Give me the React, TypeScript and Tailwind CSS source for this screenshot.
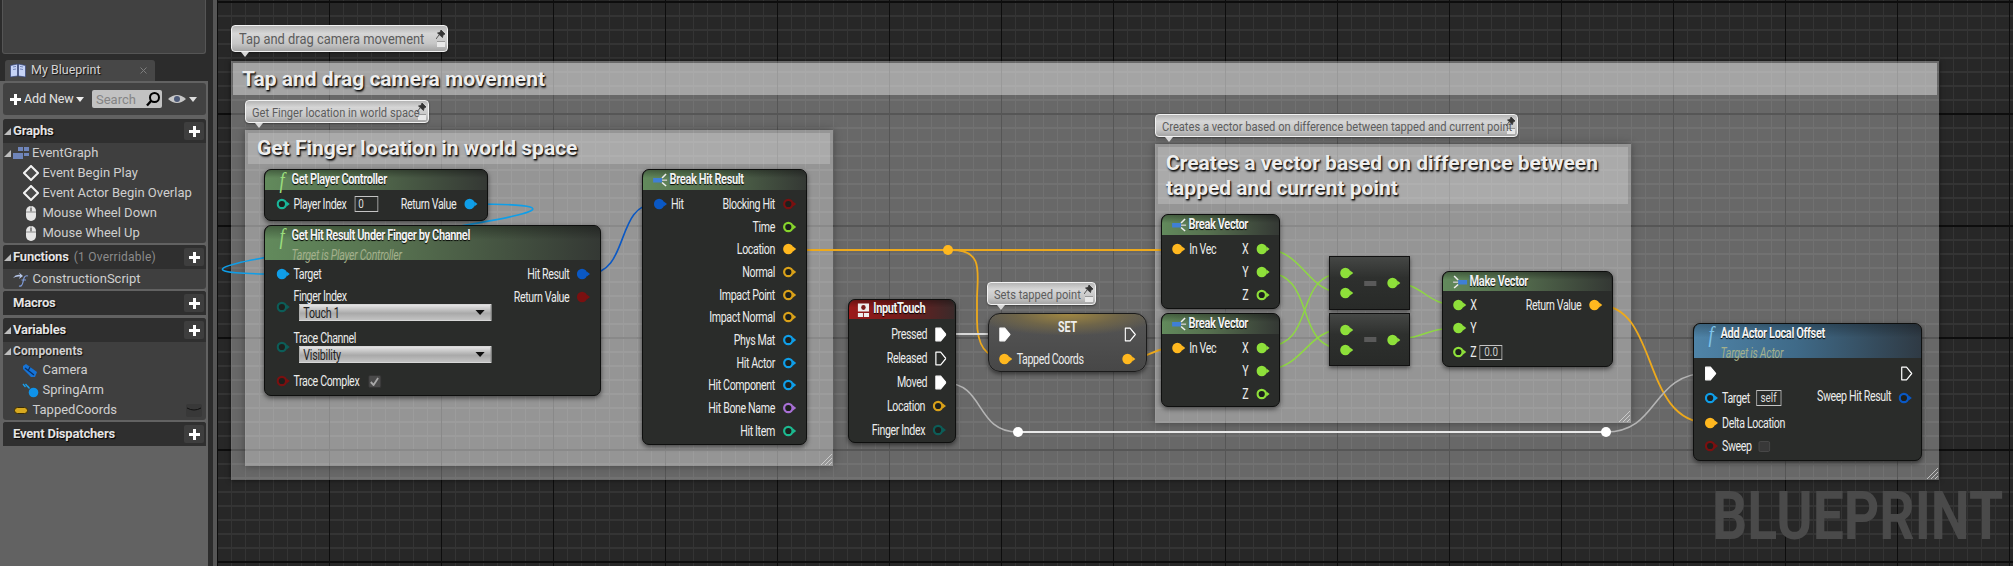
import React from "react";

type PinKind = "fill" | "ring";

/* Node contents are laid out wide and squeezed to .76, as the zoomed-out graph editor draws its text. */
function Pin({ color, kind = "fill" }: { color: string; kind?: PinKind }) {
  return (
    <svg width="18.4" height="12" viewBox="0 0 14 12" preserveAspectRatio="none" className="shrink-0">
      <path d="M10.2 3.6 L13.4 6 L10.2 8.4 Z" fill={color} />
      {kind === "fill" ? (
        <circle cx="5.5" cy="6" r="5.2" fill={color} />
      ) : (
        <circle cx="5.5" cy="6" r="4.2" fill="#1d201d" stroke={color} strokeWidth="2.2" />
      )}
    </svg>
  );
}

function Exec({ filled }: { filled?: boolean }) {
  return (
    <svg width="15.8" height="15" viewBox="0 0 12 15" preserveAspectRatio="none" className="shrink-0">
      <path
        d="M1 1.2 H5.8 L11 7.5 L5.8 13.8 H1 Z"
        fill={filled ? "#fff" : "none"}
        stroke="#fff"
        strokeWidth="1.2"
        strokeLinejoin="round"
      />
    </svg>
  );
}

const label = "text-[14px] tracking-[-0.5px] leading-none text-[#ececec] whitespace-nowrap";
const nodeBase = "absolute bg-[#2a2c2a] border border-[#0e0f0e] rounded-[7px] shadow-[0_2px_5px_rgba(0,0,0,0.55)]";

function Squeeze({ children, className = "" }: { children: React.ReactNode; className?: string }) {
  return <div className={"w-[131.6%] h-full origin-top-left scale-x-[.76] flex flex-col " + className}>{children}</div>;
}

function Title({ children, sub, icon }: { children: React.ReactNode; sub?: string; icon: React.ReactNode }) {
  return (
    <div className="flex items-start h-full pl-[12px]">
      <div className="w-[21px] h-[20px] flex items-center justify-center shrink-0 mr-[2px]">{icon}</div>
      <div className="flex flex-col">
        <span className="text-[14.5px] tracking-[-0.5px] leading-[20px] font-bold text-[#f2f2f2] whitespace-nowrap [text-shadow:0_1px_1px_#000]">
          {children}
        </span>
        {sub && (
          <span className="italic text-[14px] tracking-[-0.4px] leading-[12px] mt-[3px] text-[#a3b08c] whitespace-nowrap">{sub}</span>
        )}
      </div>
    </div>
  );
}

function FIcon({ color }: { color: string }) {
  return (
    <span className="font-['Liberation_Serif',serif] italic text-[24px] leading-[20px]" style={{ color }}>
      f
    </span>
  );
}

function StructIcon({ flip }: { flip?: boolean }) {
  return (
    <svg width="21" height="14" viewBox="0 0 16 14" preserveAspectRatio="none" className={flip ? "-scale-x-100" : ""}>
      <rect x="1" y="5" width="9" height="4.5" fill="#3f7fd6" />
      <path d="M10 5 L14 1" stroke="#eee" strokeWidth="1.6" />
      <path d="M10 7.2 L15 7.2" stroke="#ccc" strokeWidth="1.4" />
      <path d="M10 9.5 L14 13" stroke="#eee" strokeWidth="1.6" />
    </svg>
  );
}

function Row({ left, right, className = "" }: { left?: React.ReactNode; right?: React.ReactNode; className?: string }) {
  return (
    <div className={"flex items-center justify-between shrink-0 " + className}>
      <div className="flex items-center gap-[4.5px]">{left}</div>
      <div className="flex items-center gap-[10px]">{right}</div>
    </div>
  );
}

function Dropdown({ text }: { text: string }) {
  return (
    <div className="w-[253px] h-[17px] ml-[8px] flex items-center justify-between pl-[4px] pr-[8px] border border-[#d8d8d8] bg-[linear-gradient(180deg,#e4e4e4,#a9a9a9_55%,#c2c2c2)]">
      <span className="text-[14px] tracking-[-0.3px] leading-none text-[#222]">{text}</span>
      <span className="w-0 h-0 border-x-[6px] border-x-transparent border-t-[5px] border-t-[#111]" />
    </div>
  );
}

function Grip({ className }: { className: string }) {
  return (
    <svg width="12" height="12" viewBox="0 0 12 12" className={"absolute " + className}>
      <path d="M1 12 L12 1 M5 12 L12 5 M9 12 L12 9" stroke="#d8d8d8" strokeWidth="1" opacity="0.8" />
    </svg>
  );
}

function Bubble({ text, className, textClass }: { text: string; className: string; textClass: string }) {
  return (
    <div
      className={
        "absolute flex items-center rounded-[4px] border border-[#f2f2f2] bg-[linear-gradient(180deg,#b5b5b5,#d6d6d6_30%,#c6c6c6_70%,#a4a4a4)] shadow-[0_1px_2px_rgba(0,0,0,0.4)] " +
        className
      }
    >
      <div className="w-0 grow">
        <span className={"inline-block origin-left scale-x-[.89] leading-none text-[#5c5c5c] whitespace-nowrap " + textClass}>{text}</span>
      </div>
      <div className="flex flex-col items-center gap-[2px] pr-[2px] shrink-0">
        <svg width="9" height="9" viewBox="0 0 9 9">
          <path d="M5 0 L9 4 L7 5 L6.5 7.5 L1.5 3 L4 2.5 Z M3 5 L0 9" fill="#333" stroke="#333" strokeWidth="0.8" />
        </svg>
        <div className="w-[8px] h-[6px] bg-[#e8e8e8] border-t border-[#999]" />
      </div>
      <span className="absolute left-[9px] -bottom-[6px] w-0 h-0 border-x-[4px] border-x-transparent border-t-[5px] border-t-[#d8d8d8]" />
    </div>
  );
}

function Plus() {
  return (
    <span className="w-[20px] h-[18px] rounded-[2px] bg-[#3e3e3e] flex items-center justify-center shrink-0">
      <svg width="11" height="11" viewBox="0 0 11 11">
        <path d="M5.5 0 V11 M0 5.5 H11" stroke="#fff" strokeWidth="3" />
      </svg>
    </span>
  );
}

function Tri() {
  return (
    <svg width="7" height="7" viewBox="0 0 7 7" className="shrink-0">
      <path d="M0 7 L7 0 V7 Z" fill="#bdbdbd" />
    </svg>
  );
}

function SecHead({ title, extra, arrow = true }: { title: string; extra?: string; arrow?: boolean }) {
  return (
    <div className="h-[24px] flex items-center bg-[#2f2f2f] rounded-t-[3px] pl-[1px] pr-[2px] shrink-0">
      <span className="w-[9px] shrink-0 flex">{arrow && <Tri />}</span>
      <span className="text-[13px] font-bold tracking-[-0.2px] text-[#e4e4e4] [text-shadow:1px_1px_1px_#000] whitespace-nowrap">{title}</span>
      {extra && <span className="ml-[5px] text-[12px] text-[#8b8b8b] whitespace-nowrap tracking-[0.02em]">{extra}</span>}
      <span className="ml-auto">
        <Plus />
      </span>
    </div>
  );
}

function Item({ icon, text, indent }: { icon: React.ReactNode; text: string; indent: "deep" | "shallow" }) {
  return (
    <div className={"h-[20px] flex items-center " + (indent === "deep" ? "pl-[20px]" : "pl-[10px]")}>
      <span className="w-[19.5px] flex items-center shrink-0">{icon}</span>
      <span className="text-[13px] text-[#cfcfcf] whitespace-nowrap">{text}</span>
    </div>
  );
}

const Diamond = () => (
  <svg width="16" height="16" viewBox="0 0 16 16">
    <path d="M8 1 L15 8 L8 15 L1 8 Z" fill="#4a4a4a" stroke="#f2f2f2" strokeWidth="2" />
  </svg>
);
const Mouse = () => (
  <svg width="12" height="17" viewBox="0 0 12 17" className="ml-[2px]">
    <rect x="1" y="1" width="10" height="15" rx="5" fill="#e6e6e6" />
    <path d="M1 7 H11 M6 1 V7" stroke="#8a8a8a" strokeWidth="1" />
    <rect x="5" y="3" width="2" height="3" fill="#8a8a8a" />
  </svg>
);

function Sidebar() {
  return (
    <aside className="w-[208px] shrink-0 h-full bg-[#2c2c2c] flex flex-col">
      <div className="h-[54px] mx-[2px] shrink-0 bg-[#414141] border border-[#555] border-t-0 rounded-b-[3px]" />
      <div className="mt-[6px] ml-[5px] w-[150px] h-[21px] shrink-0 bg-[#474747] rounded-t-[3px] flex items-center pl-[5px] pr-[8px]">
        <svg width="16" height="15" viewBox="0 0 16 15" className="shrink-0">
          <path d="M0.5 2.5 L7.5 1 V13 L0.5 14 Z M8.5 1 L15.5 2.5 V14 L8.5 13 Z" fill="#c6d3f6" stroke="#36467c" strokeWidth="0.7" />
          <path d="M3 4 L6 3.4 M3 6.5 L6 6 M10 3.4 L13 4 M10 6 L13 6.5" stroke="#5a6ea8" strokeWidth="0.8" />
        </svg>
        <span className="ml-[5px] text-[12.5px] text-[#d4d4d4] [text-shadow:1px_1px_1px_#111]">My Blueprint</span>
        <svg width="7" height="7" viewBox="0 0 7 7" className="ml-auto">
          <path d="M0.5 0.5 L6.5 6.5 M6.5 0.5 L0.5 6.5" stroke="#7d7d7d" strokeWidth="1" />
        </svg>
      </div>
      <div className="flex-1 bg-[#626262] flex flex-col pl-[3px] pr-[2px] pt-[2px]">
        <div className="h-[32px] rounded-[3px] bg-[#424242] flex items-center pl-[7px] shrink-0">
          <svg width="11" height="11" viewBox="0 0 11 11" className="shrink-0">
            <path d="M5.5 0 V11 M0 5.5 H11" stroke="#fff" strokeWidth="3" />
          </svg>
          <span className="ml-[3px] w-[48px] text-[12.5px] tracking-[-0.1px] text-[#e2e2e2] whitespace-nowrap">Add New</span>
          <span className="ml-[4px] w-0 h-0 border-x-[4px] border-x-transparent border-t-[5px] border-t-[#eee]" />
          <div className="ml-[8px] w-[70px] h-[18px] rounded-[2px] bg-[#c2c2c2] flex items-center pl-[4px] pr-[1px] shrink-0">
            <span className="text-[13px] text-[#858585] leading-none">Search</span>
            <svg width="16" height="16" viewBox="0 0 16 16" className="ml-auto">
              <circle cx="9.5" cy="6.5" r="4.5" fill="none" stroke="#000" strokeWidth="2" />
              <path d="M6 10 L2 14.5" stroke="#000" strokeWidth="2.4" />
            </svg>
          </div>
          <svg width="18" height="10" viewBox="0 0 18 10" className="ml-[6px] shrink-0">
            <path d="M0 5 Q9 -3 18 5 Q9 13 0 5 Z" fill="#c8c8c8" />
            <circle cx="9" cy="5" r="3" fill="#4d5a78" />
          </svg>
          <span className="ml-[3px] w-0 h-0 border-x-[4px] border-x-transparent border-t-[5px] border-t-[#ddd]" />
        </div>
        <div className="mt-[4px] flex flex-col gap-[2px]">
          <section className="bg-[#3f3f3f] rounded-[3px]">
            <SecHead title="Graphs" />
            <div className="h-[20px] flex items-center pl-[1px]">
              <span className="w-[9px] flex">
                <Tri />
              </span>
              <svg width="16" height="12" viewBox="0 0 16 12" className="shrink-0 mr-[3px]">
                <path d="M5 0 H10 V4 H5 Z M11 0 H16 V4 H11 Z M0 6 H10 V12 H0 Z M11 6 H16 V9 H11 Z" fill="#6f85ba" />
              </svg>
              <span className="text-[13px] text-[#cfcfcf]">EventGraph</span>
            </div>
            <Item indent="deep" icon={<Diamond />} text="Event Begin Play" />
            <Item indent="deep" icon={<Diamond />} text="Event Actor Begin Overlap" />
            <Item indent="deep" icon={<Mouse />} text="Mouse Wheel Down" />
            <Item indent="deep" icon={<Mouse />} text="Mouse Wheel Up" />
          </section>
          <section className="bg-[#3f3f3f] rounded-[3px]">
            <SecHead title="Functions" extra="(1 Overridable)" />
            <Item
              indent="shallow"
              icon={
                <svg width="17" height="15" viewBox="0 0 17 15">
                  <path d="M0 6 Q3 2 7 3 L6 0.5 L10 4 L6 7 L7 4.5 Q3 4 0 6 Z" fill="#b7c7ea" />
                  <path d="M6 14 Q9 15 10 10 L11 6 Q12 3 15 4 M8.5 8 H13" fill="none" stroke="#7f9ad6" strokeWidth="1.2" />
                </svg>
              }
              text="ConstructionScript"
            />
          </section>
          <section className="bg-[#2f2f2f] rounded-[3px]">
            <SecHead title="Macros" arrow={false} />
          </section>
          <section className="bg-[#3f3f3f] rounded-[3px] mt-[1px]">
            <SecHead title="Variables" />
            <div className="h-[18px] flex items-center pl-[1px]">
              <span className="w-[9px] flex">
                <Tri />
              </span>
              <span className="text-[12px] font-bold text-[#cfcfcf] [text-shadow:1px_1px_1px_#111] tracking-[0.01em]">Components</span>
            </div>
            <Item
              indent="deep"
              icon={
                <svg width="17" height="15" viewBox="0 0 17 15" className="-ml-[1px]">
                  <path d="M1 3 L4 1 L15 9 L13 14 L9 14 L1 6 Z" fill="#1673d6" />
                  <path d="M3 5 L12 12 M8 4 L6 8" stroke="#0b2f63" strokeWidth="1.2" />
                </svg>
              }
              text="Camera"
            />
            <Item
              indent="deep"
              icon={
                <svg width="17" height="15" viewBox="0 0 17 15" className="-ml-[1px]">
                  <circle cx="11.5" cy="9.5" r="4.8" fill="#0f93ea" />
                  <path d="M1 1 L3.5 4 M3.5 1 L6 4 M5.5 3 L7.5 5.5" stroke="#18a0ee" strokeWidth="1.3" />
                </svg>
              }
              text="SpringArm"
            />
            <div className="h-[20px] flex items-center pl-[11px] pr-[4px]">
              <span className="w-[18.5px] flex">
                <span className="w-[14px] h-[7px] rounded-full bg-[#d8a91f] border border-[#3a2d05]" />
              </span>
              <span className="text-[13px] text-[#cfcfcf]">TappedCoords</span>
              <span className="ml-auto w-[16px] h-[13px] rounded-[2px] bg-[#383838] flex items-center justify-center">
                <svg width="14" height="6" viewBox="0 0 14 6">
                  <path d="M0 1 Q7 5 14 1" fill="none" stroke="#111" strokeWidth="1" />
                </svg>
              </span>
            </div>
          </section>
          <section className="bg-[#2f2f2f] rounded-[3px]">
            <SecHead title="Event Dispatchers" arrow={false} />
          </section>
        </div>
      </div>
    </aside>
  );
}

const GREEN =
  "rounded-t-[8px] bg-[linear-gradient(180deg,rgba(0,0,0,0.3),rgba(0,0,0,0)_40%),linear-gradient(90deg,#628a5c,#56704f_40%,#343834_100%)]";
const G = "#8ee03a";
const GOLD = "#ffb81f";
const GOLD2 = "#d9a119";
const CY = "#0f9ee8";
const ctitle = "font-bold text-[#eeeeee] [text-shadow:1px_1px_1px_#111,1px_2px_2px_#333]";

function Canvas() {
  return (
    <main className="relative flex-1 h-full overflow-hidden bg-[#272727] bg-[linear-gradient(90deg,#0d0d0d_1.5px,transparent_1.5px),linear-gradient(0deg,#0d0d0d_1.5px,transparent_1.5px),linear-gradient(90deg,#343434_1.5px,transparent_1.5px),linear-gradient(0deg,#343434_1.5px,transparent_1.5px)] bg-[size:112px_112px,112px_112px,14px_14px,14px_14px] bg-[position:0px_0px,0px_3px,0px_0px,0px_3px]">
      {/* comments */}
      <div className="absolute left-[14px] top-[61px] w-[1708px] h-[419px] bg-white/30 shadow-[0_0_5px_rgba(0,0,0,0.6)] p-[2px]">
        <div className="h-[32px] pl-[9px] bg-white/40 flex items-center">
          <span className={"text-[21px] leading-none " + ctitle}>Tap and drag camera movement</span>
        </div>
        <Grip className="right-[1px] bottom-[1px]" />
      </div>
      <div className="absolute left-[28px] top-[130px] w-[588px] h-[336px] bg-white/30 shadow-[0_0_8px_rgba(0,0,0,0.35)] p-[3px]">
        <div className="h-[31px] pl-[9px] bg-white/20 flex items-center">
          <span className={"text-[21px] leading-none " + ctitle}>Get Finger location in world space</span>
        </div>
        <Grip className="right-[1px] bottom-[1px]" />
      </div>
      <div className="absolute left-[938px] top-[144px] w-[476px] h-[279px] bg-white/30 shadow-[0_0_8px_rgba(0,0,0,0.35)] p-[3px]">
        <div className="h-[57px] pl-[8px] bg-white/20 flex items-center">
          <span className={"text-[21px] w-[450px] leading-[25px] " + ctitle}>
            Creates a vector based on difference between tapped and current point
          </span>
        </div>
        <Grip className="right-[1px] bottom-[1px]" />
      </div>

      <Bubble text="Tap and drag camera movement" className="left-[14px] top-[25px] w-[217px] h-[27px] pl-[7px]" textClass="text-[14.5px]" />
      <Bubble text="Get Finger location in world space" className="left-[28px] top-[100px] w-[184px] h-[23px] pl-[6px]" textClass="text-[12.5px]" />
      <Bubble text="Creates a vector based on difference between tapped and current point" className="left-[938px] top-[114px] w-[363px] h-[23px] pl-[6px]" textClass="text-[12.5px]" />
      <Bubble text="Sets tapped point" className="left-[770px] top-[282px] w-[109px] h-[23px] pl-[6px]" textClass="text-[12.5px]" />

      {/* wires */}
      <svg width="1796" height="566" viewBox="217 0 1796 566" fill="none" className="absolute left-0 top-0">
        <path d="M472 204 C740 204 20 274 280 274" stroke="#0f9ee8" strokeWidth="1.6" />
        <path d="M588 274 C630 274 615 204 655 204" stroke="#0a58c4" strokeWidth="1.6" />
        <g stroke="#eda91c" strokeWidth="1.8">
          <path d="M792 250 H1177" />
          <path d="M952 250 C985 250 977 275 977 300 V320 C977 345 985 358 1004 358" />
          <path d="M1132 358 C1150 358 1155 347 1177 347" />
          <path d="M1598 305 C1660 305 1640 423 1709 423" />
        </g>
        <g stroke="#8ee03a" strokeWidth="1.5" opacity="0.9">
          <path d="M1263 249 C1305 249 1305 293 1345 293" />
          <path d="M1263 272 C1320 272 1290 349 1345 349" />
          <path d="M1263 347 C1320 347 1290 273 1345 273" />
          <path d="M1263 370 C1305 370 1305 329 1345 329" />
          <path d="M1393 283 C1425 283 1425 305 1457 305" />
          <path d="M1393 339 C1425 339 1425 328 1457 328" />
        </g>
        <path d="M945 334 H1004" stroke="#d8d8d8" strokeWidth="2" />
        <path d="M945 383 C985 383 975 432 1018 432" stroke="#b4b4b4" strokeWidth="1.6" />
        <path d="M1018 432 H1606" stroke="#e8e8e8" strokeWidth="2" />
        <path d="M1606 432 C1660 432 1650 373 1709 373" stroke="#b4b4b4" strokeWidth="1.6" />
      </svg>

      {/* knots */}
      <span className="absolute left-[726px] top-[245px] w-[10px] h-[10px] rounded-full bg-[#ffb81f]" />
      <span className="absolute left-[796px] top-[427px] w-[10px] h-[10px] rounded-full bg-white" />
      <span className="absolute left-[1384px] top-[427px] w-[10px] h-[10px] rounded-full bg-white" />

      {/* Get Player Controller */}
      <div className={nodeBase + " left-[47px] top-[169px] w-[224px] h-[52px]"}>
        <Squeeze>
          <div className={"h-[20px] shrink-0 " + GREEN}>
            <Title icon={<FIcon color="#9ade7d" />}>Get Player Controller</Title>
          </div>
          <Row
            className="h-[24px] mt-[2px] pl-[14.5px] pr-[12px]"
            left={
              <>
                <Pin color="#19b69a" kind="ring" />
                <span className={label}>Player Index</span>
                <span className="ml-[6px] w-[31.6px] h-[16px] border border-[#c4c4c4] flex items-center pl-[4px] text-[13px] text-[#ddd]">0</span>
              </>
            }
            right={
              <>
                <span className={label}>Return Value</span>
                <Pin color={CY} />
              </>
            }
          />
        </Squeeze>
      </div>

      {/* Get Hit Result */}
      <div className={nodeBase + " left-[47px] top-[225px] w-[337px] h-[171px]"}>
        <Squeeze>
          <div className={"h-[34px] shrink-0 " + GREEN}>
            <Title icon={<FIcon color="#9ade7d" />} sub="Target is Player Controller">
              Get Hit Result Under Finger by Channel
            </Title>
          </div>
          <Row
            className="h-[22px] mt-[3px] pl-[14.5px] pr-[12px]"
            left={
              <>
                <Pin color={CY} />
                <span className={label}>Target</span>
              </>
            }
            right={
              <>
                <span className={label}>Hit Result</span>
                <Pin color="#0a58c4" />
              </>
            }
          />
          <div className="mt-[2px] h-[34px] flex justify-between pl-[14.5px] pr-[12px] shrink-0">
            <div className="flex items-center gap-[4.5px]">
              <span className="mt-[6px]">
                <Pin color="#0c5d58" kind="ring" />
              </span>
              <div className="flex flex-col">
                <span className={label + " h-[17px] flex items-center"}>Finger Index</span>
                <Dropdown text="Touch 1" />
              </div>
            </div>
            <div className="flex items-center gap-[10px] h-[20px]">
              <span className={label}>Return Value</span>
              <Pin color="#7a1010" />
            </div>
          </div>
          <div className="mt-[8px] h-[34px] flex gap-[4.5px] pl-[14.5px] shrink-0 items-center">
            <span className="mt-[2px]">
              <Pin color="#0c5d58" kind="ring" />
            </span>
            <div className="flex flex-col">
              <span className={label + " h-[17px] flex items-center"}>Trace Channel</span>
              <Dropdown text="Visibility" />
            </div>
          </div>
          <Row
            className="h-[20px] mt-[8px] pl-[14.5px]"
            left={
              <>
                <Pin color="#7a1010" kind="ring" />
                <span className={label}>Trace Complex</span>
                <span className="ml-[7px] w-[17px] h-[13px] rounded-[2px] bg-[#4a4a4a] border border-[#333] flex items-center justify-center">
                  <svg width="12" height="9" viewBox="0 0 10 9" preserveAspectRatio="none">
                    <path d="M1 5 L4 8 L9 1" fill="none" stroke="#a8a8a8" strokeWidth="2" />
                  </svg>
                </span>
              </>
            }
          />
        </Squeeze>
      </div>

      {/* Break Hit Result */}
      <div className={nodeBase + " left-[425px] top-[169px] w-[165px] h-[276px]"}>
        <Squeeze>
          <div className={"h-[20px] shrink-0 " + GREEN}>
            <Title icon={<StructIcon />}>Break Hit Result</Title>
          </div>
          <div className="flex flex-col pt-[2.6px] pl-[14px] pr-[12.5px]">
            <Row
              className="h-[22.7px]"
              left={
                <>
                  <Pin color="#0a58c4" />
                  <span className={label}>Hit</span>
                </>
              }
              right={
                <>
                  <span className={label}>Blocking Hit</span>
                  <Pin color="#7a1010" kind="ring" />
                </>
              }
            />
            {(
              [
                ["Time", "#86d42c", "ring"],
                ["Location", GOLD, "fill"],
                ["Normal", GOLD2, "ring"],
                ["Impact Point", GOLD2, "ring"],
                ["Impact Normal", GOLD2, "ring"],
                ["Phys Mat", CY, "ring"],
                ["Hit Actor", CY, "ring"],
                ["Hit Component", CY, "ring"],
                ["Hit Bone Name", "#a76fd4", "ring"],
                ["Hit Item", "#1cb88f", "ring"],
              ] as [string, string, PinKind][]
            ).map(([t, c, k]) => (
              <Row
                key={t}
                className="h-[22.7px]"
                right={
                  <>
                    <span className={label}>{t}</span>
                    <Pin color={c} kind={k} />
                  </>
                }
              />
            ))}
          </div>
        </Squeeze>
      </div>

      {/* InputTouch */}
      <div className={nodeBase + " left-[631px] top-[299px] w-[108px] h-[144px]"}>
        <Squeeze>
          <div className="h-[19px] shrink-0 rounded-t-[8px] flex items-center pl-[11px] bg-[linear-gradient(180deg,rgba(0,0,0,0.3),rgba(0,0,0,0)_40%),linear-gradient(90deg,#9c1a1a,#7c1a1a_40%,#3a2a2a_100%)]">
            <svg width="16" height="14" viewBox="0 0 13 14" preserveAspectRatio="none" className="shrink-0">
              <rect x="0.5" y="0.5" width="12" height="8" fill="#eee" />
              <circle cx="6.5" cy="4.5" r="2.4" fill="#7a1a1a" />
              <rect x="0.5" y="10" width="5.5" height="4" fill="#eee" />
              <rect x="7" y="10" width="5.5" height="4" fill="#eee" />
            </svg>
            <span className="ml-[5px] text-[14.5px] tracking-[-0.5px] font-bold leading-none text-[#f2f2f2] [text-shadow:0_1px_1px_#000]">InputTouch</span>
          </div>
          <div className="flex flex-col pt-[3px] pr-[11px]">
            {(
              [
                ["Pressed", <Exec filled />],
                ["Released", <Exec />],
                ["Moved", <Exec filled />],
                ["Location", <Pin color={GOLD2} kind="ring" />],
                ["Finger Index", <Pin color="#0c5d58" kind="ring" />],
              ] as [string, React.ReactNode][]
            ).map(([t, p]) => (
              <Row
                key={t}
                className="h-[24px]"
                right={
                  <>
                    <span className={label}>{t}</span>
                    {p}
                  </>
                }
              />
            ))}
          </div>
        </Squeeze>
      </div>

      {/* SET */}
      <div className="absolute left-[771px] top-[313px] w-[159px] h-[59px] rounded-[12px] border border-[#1b1b1b] shadow-[0_2px_4px_rgba(0,0,0,0.5)] bg-[radial-gradient(ellipse_60%_38%_at_50%_0%,#a08742_0%,#6f6549_55%,transparent_100%),linear-gradient(180deg,#565656,#474747)]">
        <Squeeze className="pl-[13px] pr-[13px] pt-[7px]">
          <div className="h-[27px] flex items-center justify-between shrink-0">
            <Exec filled />
            <span className="self-start text-[14px] font-bold leading-[12px] text-[#eee]">SET</span>
            <Exec />
          </div>
          <div className="h-[21px] flex items-center justify-between shrink-0">
            <div className="flex items-center gap-[5px]">
              <Pin color={GOLD} />
              <span className={label}>Tapped Coords</span>
            </div>
            <Pin color={GOLD} />
          </div>
        </Squeeze>
      </div>

      {/* Break Vector 1/2 */}
      {[
        "left-[944px] top-[214px] w-[119px] h-[95px]",
        "left-[944px] top-[313px] w-[119px] h-[94px]",
      ].map((pos) => (
        <div key={pos} className={nodeBase + " " + pos}>
          <Squeeze>
            <div className={"h-[20px] shrink-0 " + GREEN}>
              <Title icon={<StructIcon />}>Break Vector</Title>
            </div>
            <div className="flex flex-col pt-[2.5px] pl-[13px] pr-[12px]">
              <Row
                className="h-[23px]"
                left={
                  <>
                    <Pin color={GOLD} />
                    <span className={label}>In Vec</span>
                  </>
                }
                right={
                  <>
                    <span className={label}>X</span>
                    <Pin color={G} />
                  </>
                }
              />
              <Row
                className="h-[23px]"
                right={
                  <>
                    <span className={label}>Y</span>
                    <Pin color={G} />
                  </>
                }
              />
              <Row
                className="h-[23px]"
                right={
                  <>
                    <span className={label}>Z</span>
                    <Pin color={G} kind="ring" />
                  </>
                }
              />
            </div>
          </Squeeze>
        </div>
      ))}

      {/* Minus nodes */}
      {["left-[1112px] top-[256px] w-[81px] h-[54px]", "left-[1112px] top-[313px] w-[81px] h-[53px]"].map((pos) => (
        <div
          key={pos}
          className={
            "absolute bg-[linear-gradient(180deg,#454745,#2e302e_40%,#282a28)] border border-[#111] shadow-[0_2px_4px_rgba(0,0,0,0.5)] " +
            pos
          }
        >
          <Squeeze className="flex-row items-center justify-between pl-[13px] pr-[11px]">
            <div className="flex flex-col gap-[8px]">
              <Pin color={G} />
              <Pin color={G} />
            </div>
            <span className="w-[16px] h-[5px] bg-[#5a5a5a]" />
            <Pin color={G} />
          </Squeeze>
        </div>
      ))}

      {/* Make Vector */}
      <div className={nodeBase + " left-[1225px] top-[271px] w-[171px] h-[96px]"}>
        <Squeeze>
          <div className={"h-[19px] shrink-0 " + GREEN}>
            <Title icon={<StructIcon flip />}>Make Vector</Title>
          </div>
          <div className="flex flex-col pt-[2.5px] pl-[13px] pr-[12px]">
            <Row
              className="h-[23px]"
              left={
                <>
                  <Pin color={G} />
                  <span className={label}>X</span>
                </>
              }
              right={
                <>
                  <span className={label}>Return Value</span>
                  <Pin color={GOLD} />
                </>
              }
            />
            <Row
              className="h-[23px]"
              left={
                <>
                  <Pin color={G} />
                  <span className={label}>Y</span>
                </>
              }
            />
            <Row
              className="h-[25px]"
              left={
                <>
                  <Pin color={G} kind="ring" />
                  <span className={label}>Z</span>
                  <span className="w-[30px] h-[15px] border border-[#c4c4c4] flex items-center justify-center text-[13px] text-[#ccc]">0.0</span>
                </>
              }
            />
          </div>
        </Squeeze>
      </div>

      {/* Add Actor Local Offset */}
      <div className={nodeBase + " left-[1476px] top-[323px] w-[229px] h-[138px]"}>
        <Squeeze>
          <div className="h-[34px] shrink-0 rounded-t-[8px] bg-[linear-gradient(180deg,rgba(0,0,0,0.25),rgba(0,0,0,0)_40%),linear-gradient(90deg,#4f84a8,#3f6a88_45%,#2f3a44_100%)]">
            <Title icon={<FIcon color="#7fc4ea" />} sub="Target is Actor">
              Add Actor Local Offset
            </Title>
          </div>
          <div className="flex flex-col pt-[3px] pl-[14px] pr-[11px]">
            <Row className="h-[24px]" left={<Exec filled />} right={<Exec />} />
            <Row
              className="h-[26px]"
              left={
                <>
                  <Pin color={CY} kind="ring" />
                  <span className={label}>Target</span>
                  <span className="ml-[3.5px] w-[33px] h-[16px] border border-[#c4c4c4] flex items-center justify-center text-[13px] text-[#ddd]">self</span>
                </>
              }
              right={
                <>
                  <span className={label + " -mt-[4px]"}>Sweep Hit Result</span>
                  <Pin color="#0a58c4" kind="ring" />
                </>
              }
            />
            <Row
              className="h-[24px]"
              left={
                <>
                  <Pin color={GOLD} />
                  <span className={label}>Delta Location</span>
                </>
              }
            />
            <Row
              className="h-[22px]"
              left={
                <>
                  <Pin color="#7a1010" kind="ring" />
                  <span className={label}>Sweep</span>
                  <span className="ml-[5px] w-[14.5px] h-[11px] rounded-[2px] bg-[#383838] border border-[#4a4a4a]" />
                </>
              }
            />
          </div>
        </Squeeze>
      </div>

      <span className="absolute left-[1495px] top-[484px] origin-top-left scale-x-[.837] text-[66px] font-bold leading-none text-[#4a4a4a]">
        BLUEPRINT
      </span>
    </main>
  );
}

export default function App() {
  return (
    <div className="w-[2013px] h-[566px] flex overflow-hidden bg-[#2c2c2c] font-[Roboto,sans-serif]">
      <Sidebar />
      <div className="w-[5px] shrink-0 bg-[#2c2c2c]" />
      <div className="w-[4px] shrink-0 bg-[#565656]" />
      <Canvas />
    </div>
  );
}
